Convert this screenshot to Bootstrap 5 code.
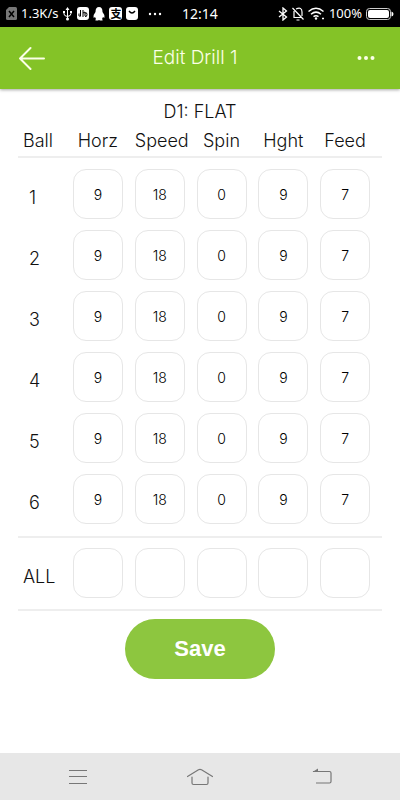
<!DOCTYPE html>
<html lang="en">
<head>
<meta charset="utf-8">
<meta name="viewport" content="width=device-width, initial-scale=1">
<title>Edit Drill 1</title>
<link href="https://cdn.jsdelivr.net/npm/bootstrap@5.3.0/dist/css/bootstrap.min.css" rel="stylesheet">
<style>
  body { font-family: Inter, "Liberation Sans", sans-serif; font-weight: 300; color: #111; background: #fff; }
  svg { display: block; flex: none; }
  .status { display: grid; grid-template-columns: 1fr auto 1fr; height: 27px; padding: 0 6px; background: #000; color: #fff; font: 400 13px/27px "Noto Sans", sans-serif; }
  .status .clock { font-size: 14px; }
  .pay { border-radius: 3px; background: #fff; color: #000; padding: 0 1px; font: 700 11px/13px "Noto Sans CJK SC", sans-serif; }
  .topbar { display: grid; grid-template-columns: 48px 1fr 58px; height: 62px; padding: 0 10px; background: #84c327; color: #fff; box-shadow: 0 1px 3px rgba(0,0,0,.35); }
  .topbar h1 { font-size: 19px; line-height: 24px; font-weight: 300; color: #fbffe8; }
  .topbar .btn { color: #fbffe8; }
  .drill { padding: 12px 18px 0; }
  .drill h2 { font-size: 18px; line-height: 22px; font-weight: 300; }
  .grid { table-layout: fixed; font-size: 18px; line-height: 24px; }
  .grid .first { width: 55px; }
  .grid th { font-weight: 300; padding: 0; white-space: nowrap; }
  .grid thead th { padding: 6px 12px 3px 0; text-align: center; }
  .grid thead, .grid tbody { border-bottom: 2px solid #eee; }
  .grid thead .first, .grid .all th { text-align: left; padding-left: 5px; padding-right: 0; }
  .grid tbody th { padding: 18px 0 0 11px; }
  .grid td { padding: 11px 0 0; }
  .grid .reps tr:last-child > * { padding-bottom: 12px; }
  .grid .all > tr > * { padding-bottom: 11px; }
  .grid .all td { padding-top: 10px; }
  .cell { display: block; width: 50px; height: 50px; padding: 0; border: 1px solid #e6e6e6; border-radius: 13px; background: #fff; text-align: center; font-size: 14px; font-weight: 300; color: #000; }
  .save { width: 150px; height: 60px; background: #8dc63f; color: #fff; font: 700 22px/24px "Liberation Sans", sans-serif; }
  .save:hover { background: #80b838; color: #fff; }
  .sysnav { display: grid; grid-template-columns: repeat(3, 122px); justify-content: center; height: 47px; background: #e7e7e7; }
</style>
</head>
<body class="d-flex flex-column min-vh-100">
<div class="status">
  <div class="d-flex align-items-center">
    <svg width="11" height="13" viewBox="0 0 11 13"><path d="M3 0h6.500Q11 0 11 1.500v10Q11 13 9.500 13h-8Q0 13 0 11.500V3z" fill="#777"/><path d="M3 4l5 6M8 4l-5 6" stroke="#000" stroke-width="1.500"/></svg>
    <span class="ps-1 pe-1 ms-n1">1.3K/s</span>
    <svg class="me-1" width="11" height="14" viewBox="0 0 11 14" fill="none" stroke="#fff"><path d="M5.500 2v9M2 5v2q0 2 3.500 2.500Q9 9 9 6.500V5"/><path d="M5.500 0l2 3h-4zM1 4h2v2H1zM8 4h2v2H8z" fill="#fff" stroke="none"/><circle cx="5.500" cy="12" r="1.500" fill="#fff" stroke="none"/></svg>
    <svg class="me-1" width="12" height="13" viewBox="0 0 12 13"><rect width="12" height="13" rx="3" fill="#fff"/><path d="M3.500 3v6M2 6.500q-1 3 1.500 3M6 3v7M6 6l2-1v4M8 6q2-1 2 1.500T8 9.500" fill="none" stroke="#000"/></svg>
    <svg class="me-1" width="12" height="14" viewBox="0 0 12 14"><path d="M6 0Q9.500 0 9.500 5q2.500 3 2 5.500-.5 .5-1.500-.5l-1 2q1 .5.500 1.500H7L6 13l-1 .5H2.500Q2 12.500 3 12l-1-2q-1 1-1.500.5Q0 8 2.500 5 2.500 0 6 0z" fill="#fff"/></svg>
    <span class="pay me-1">支</span>
    <svg width="12" height="13" viewBox="0 0 12 13"><rect width="12" height="13" rx="3" fill="#fff"/><path d="M3 4q3 4 6 0" fill="none" stroke="#000" stroke-width="1.300"/></svg>
    <svg class="ms-2" width="18" height="4" viewBox="0 0 18 4" fill="#fff"><circle cx="4" cy="2" r="1.200"/><circle cx="9" cy="2" r="1.200"/><circle cx="14" cy="2" r="1.200"/></svg>
  </div>
  <div class="clock">12:14</div>
  <div class="d-flex align-items-center justify-content-end gap-1">
    <svg width="10" height="14" viewBox="0 0 10 14" fill="none" stroke="#fff" stroke-width="1.300"><path d="M1 4l7.500 6L5 13V1l3.500 3L1 10"/></svg>
    <svg width="12" height="14" viewBox="0 0 12 14" fill="none" stroke="#fff" stroke-width="1.200"><path d="M4 2q6-2.500 6 3v4M2 4v6.500h7.500M0.500 1L11.500 12.500M4.500 13h3"/></svg>
    <svg width="17" height="13" viewBox="0 0 17 13" fill="none" stroke="#fff" stroke-width="1.500"><path d="M0.500 4.500Q8 -2 15.500 4.500M3 7.200Q8 3 13 7.200M5.500 9.700Q8 7.700 10.500 9.700"/><circle cx="8" cy="11.500" r="1.200" fill="#fff" stroke="none"/><path d="M14 11.500h2"/></svg>
    <span>100%</span>
    <svg width="28" height="12" viewBox="0 0 28 12"><rect x=".5" y=".5" width="24" height="11" rx="3" fill="none" stroke="#ccc"/><rect x="2" y="2" width="21" height="8" rx="2" fill="#fff"/><path d="M25.500 3.500q2 .5 2 2.500t-2 2.500z" fill="#fff"/></svg>
  </div>
</div>

<header class="topbar align-items-center">
  <button type="button" class="btn p-0 ps-2" aria-label="Back"><svg width="26" height="24" viewBox="0 0 26 24" fill="none" stroke="currentColor" stroke-width="2" stroke-linecap="round" stroke-linejoin="round"><path d="M11.500 2L1 12.500 11.500 23M1 12.500h24"/></svg></button>
  <h1 class="m-0 text-center">Edit Drill 1</h1>
  <button type="button" class="btn p-0 ps-4" aria-label="More options"><svg width="18" height="6" viewBox="0 0 18 6" fill="currentColor"><circle cx="2.500" cy="3" r="2"/><circle cx="9" cy="3" r="2"/><circle cx="15.500" cy="3" r="2"/></svg></button>
</header>

<main class="drill">
  <h2 class="m-0 text-center">D1: FLAT</h2>
  <table class="grid w-100">
    <thead>
      <tr><th class="first" scope="col">Ball</th><th scope="col">Horz</th><th scope="col">Speed</th><th scope="col">Spin</th><th scope="col">Hght</th><th scope="col">Feed</th></tr>
    </thead>
    <tbody class="reps">
      <tr><th scope="row">1</th><td><input class="cell" aria-label="Ball 1 Horz" value="9"></td><td><input class="cell" aria-label="Ball 1 Speed" value="18"></td><td><input class="cell" aria-label="Ball 1 Spin" value="0"></td><td><input class="cell" aria-label="Ball 1 Hght" value="9"></td><td><input class="cell" aria-label="Ball 1 Feed" value="7"></td></tr>
      <tr><th scope="row">2</th><td><input class="cell" aria-label="Ball 2 Horz" value="9"></td><td><input class="cell" aria-label="Ball 2 Speed" value="18"></td><td><input class="cell" aria-label="Ball 2 Spin" value="0"></td><td><input class="cell" aria-label="Ball 2 Hght" value="9"></td><td><input class="cell" aria-label="Ball 2 Feed" value="7"></td></tr>
      <tr><th scope="row">3</th><td><input class="cell" aria-label="Ball 3 Horz" value="9"></td><td><input class="cell" aria-label="Ball 3 Speed" value="18"></td><td><input class="cell" aria-label="Ball 3 Spin" value="0"></td><td><input class="cell" aria-label="Ball 3 Hght" value="9"></td><td><input class="cell" aria-label="Ball 3 Feed" value="7"></td></tr>
      <tr><th scope="row">4</th><td><input class="cell" aria-label="Ball 4 Horz" value="9"></td><td><input class="cell" aria-label="Ball 4 Speed" value="18"></td><td><input class="cell" aria-label="Ball 4 Spin" value="0"></td><td><input class="cell" aria-label="Ball 4 Hght" value="9"></td><td><input class="cell" aria-label="Ball 4 Feed" value="7"></td></tr>
      <tr><th scope="row">5</th><td><input class="cell" aria-label="Ball 5 Horz" value="9"></td><td><input class="cell" aria-label="Ball 5 Speed" value="18"></td><td><input class="cell" aria-label="Ball 5 Spin" value="0"></td><td><input class="cell" aria-label="Ball 5 Hght" value="9"></td><td><input class="cell" aria-label="Ball 5 Feed" value="7"></td></tr>
      <tr><th scope="row">6</th><td><input class="cell" aria-label="Ball 6 Horz" value="9"></td><td><input class="cell" aria-label="Ball 6 Speed" value="18"></td><td><input class="cell" aria-label="Ball 6 Spin" value="0"></td><td><input class="cell" aria-label="Ball 6 Hght" value="9"></td><td><input class="cell" aria-label="Ball 6 Feed" value="7"></td></tr>
    </tbody>
    <tbody class="all">
      <tr><th scope="row">ALL</th><td><input class="cell" aria-label="All Horz"></td><td><input class="cell" aria-label="All Speed"></td><td><input class="cell" aria-label="All Spin"></td><td><input class="cell" aria-label="All Hght"></td><td><input class="cell" aria-label="All Feed"></td></tr>
    </tbody>
  </table>
  <div class="text-center pt-2 pb-3"><button type="button" class="btn save rounded-pill border-0">Save</button></div>
</main>

<nav class="sysnav mt-auto" aria-label="System">
  <button type="button" class="btn p-0 d-flex align-items-center justify-content-center" aria-label="Recent apps"><svg width="20" height="16" viewBox="0 0 20 16" stroke="#777"><path d="M1 1.500h18M1 7.500h18M1 14.500h18"/></svg></button>
  <button type="button" class="btn p-0 d-flex align-items-center justify-content-center" aria-label="Home"><svg width="26" height="18" viewBox="0 0 26 18" fill="none" stroke="#777" stroke-width="1.200" stroke-linecap="round" stroke-linejoin="round"><path d="M.5 8.500L11.500 1.800q1.500-.9 3 0l11 6.700M5 9v6q0 1.500 1.500 1.500h13Q21 16.500 21 15V9"/></svg></button>
  <button type="button" class="btn p-0 d-flex align-items-center justify-content-center" aria-label="Back"><svg width="20" height="17" viewBox="0 0 20 17" fill="none" stroke="#777" stroke-width="1.200"><path d="M1 3.500h16.500q1.500 0 1.500 1.500v8.500q0 1.500-1.500 1.500H4"/><path d="M.5 4L6 .5V4z" fill="#777" stroke="none"/></svg></button>
</nav>
<script src="https://cdn.jsdelivr.net/npm/bootstrap@5.3.0/dist/js/bootstrap.bundle.min.js"></script>
</body>
</html>
